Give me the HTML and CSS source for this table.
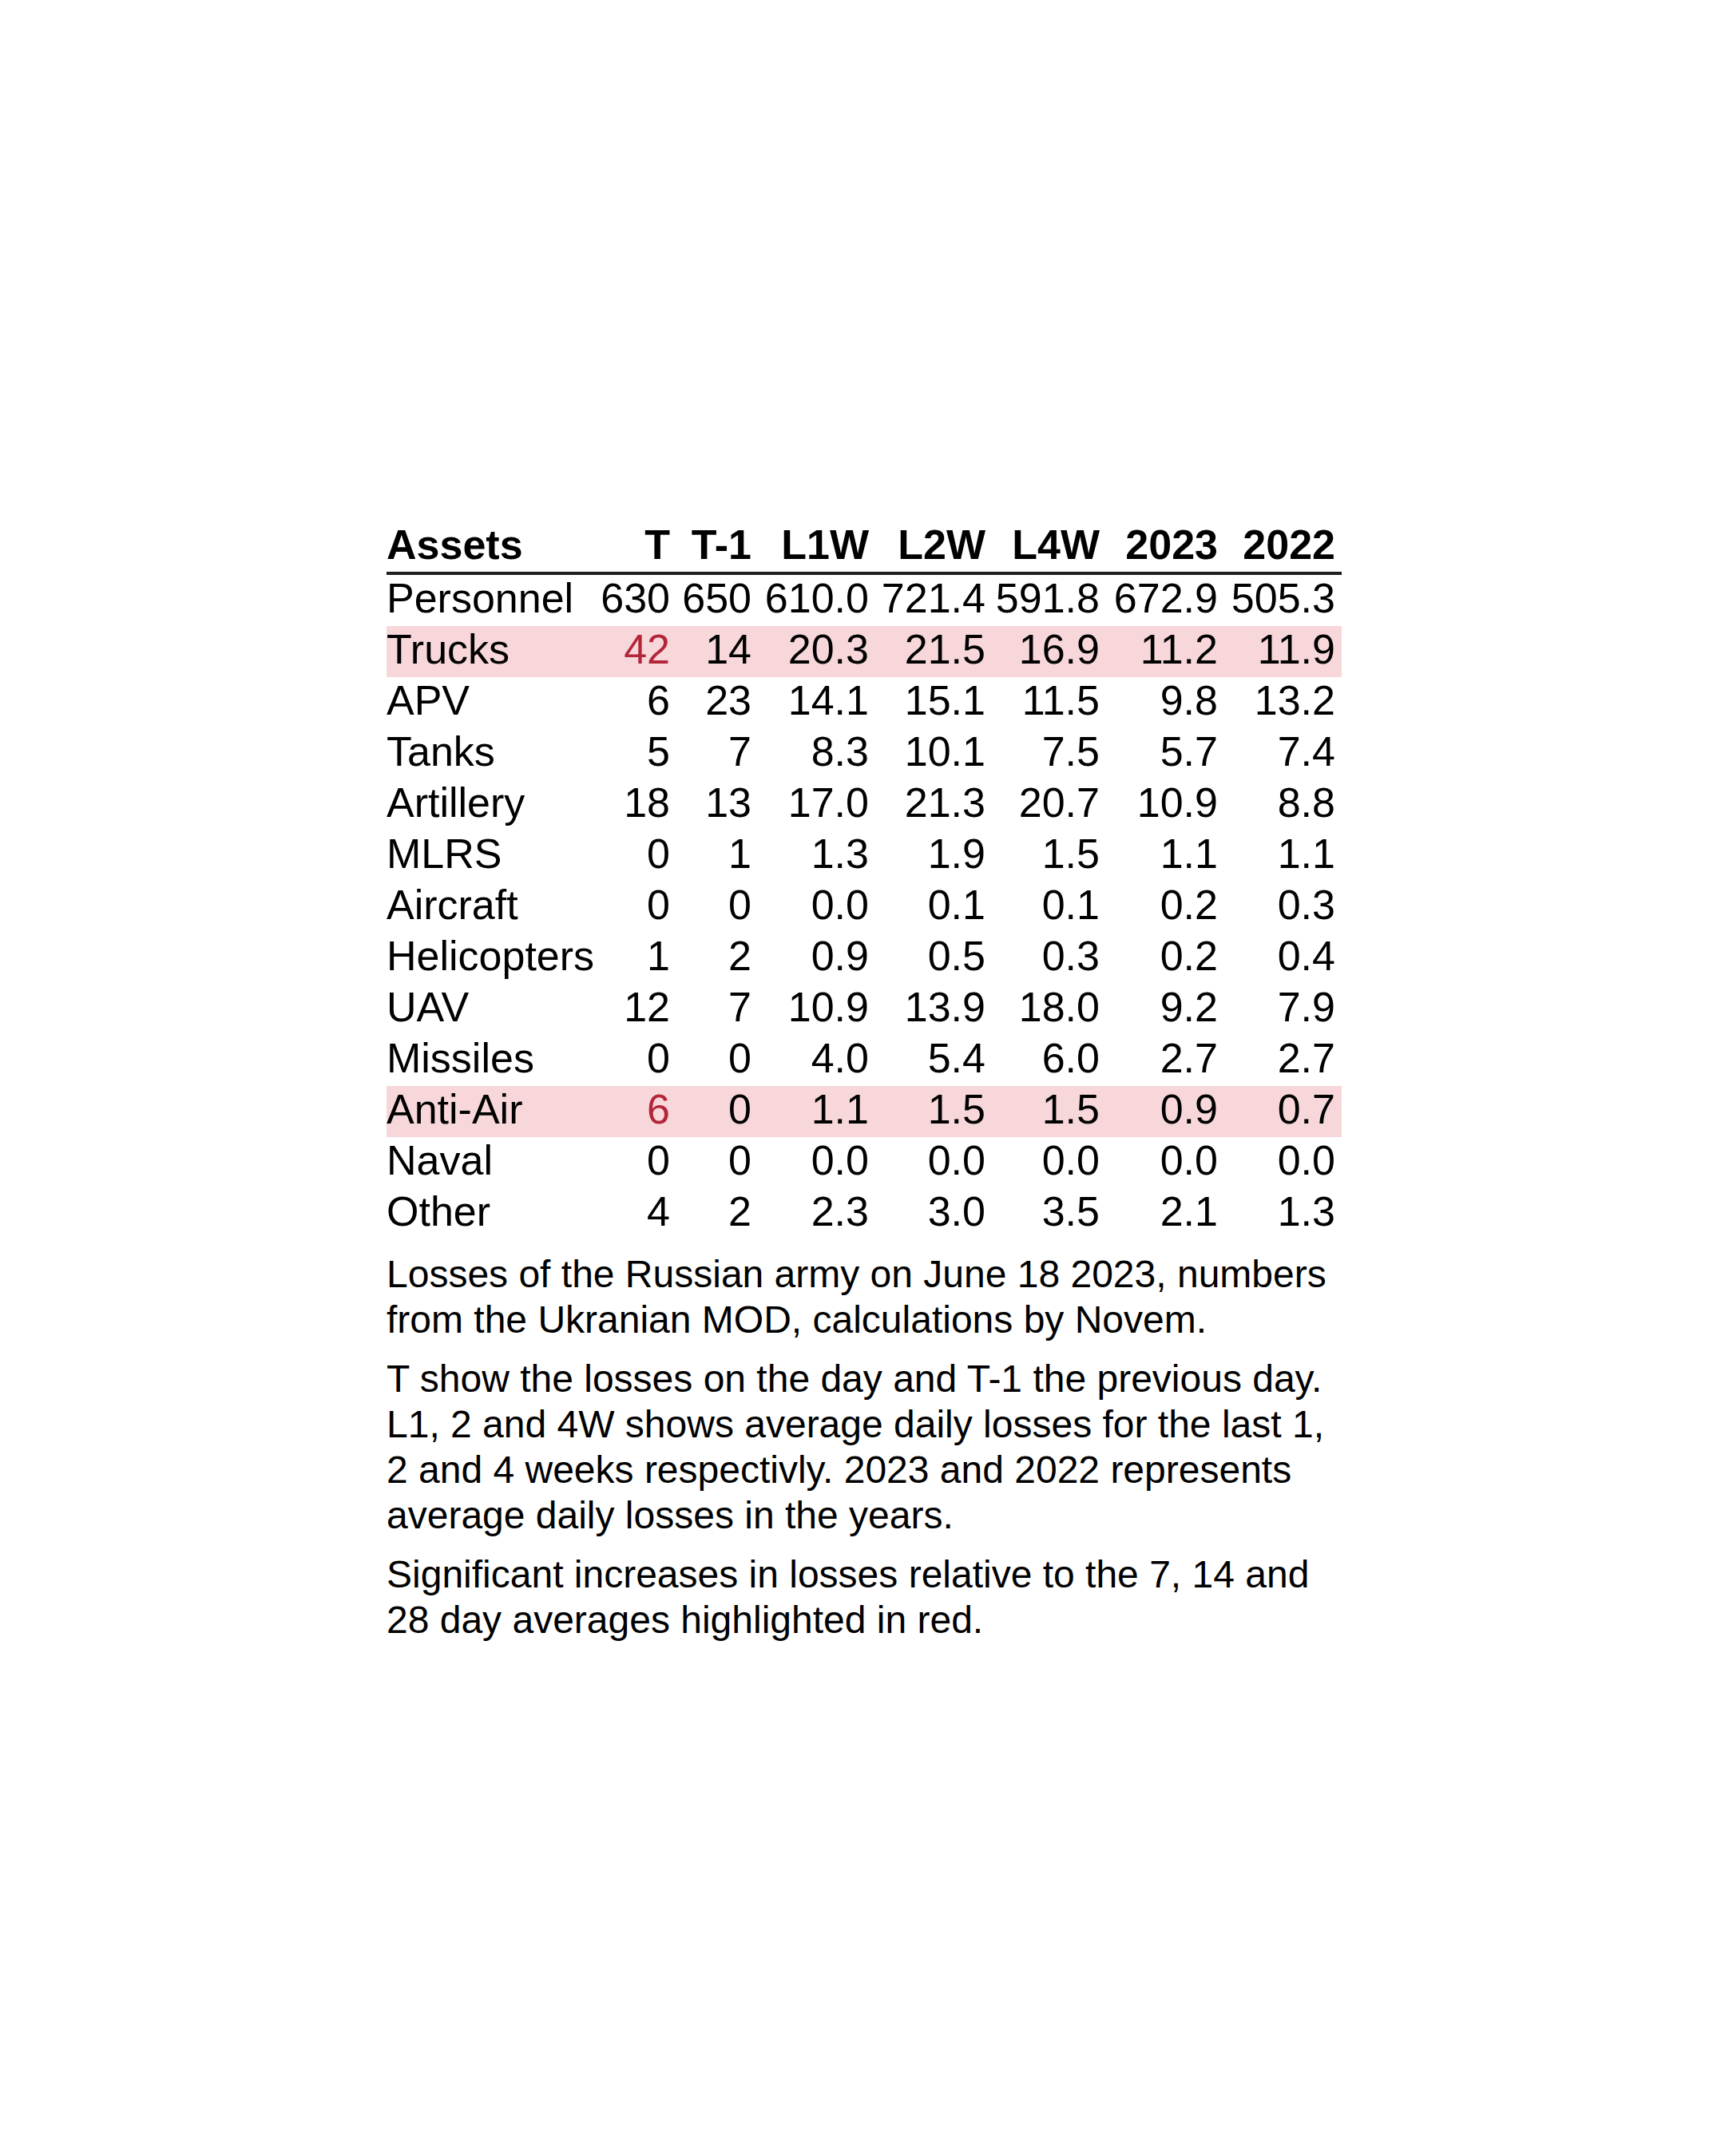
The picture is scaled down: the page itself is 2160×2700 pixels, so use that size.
FILE: index.html
```html
<!DOCTYPE html>
<html lang="en">
<head>
<meta charset="utf-8">
<title>Losses of the Russian army</title>
<link rel="stylesheet" href="styles.css">
</head>
<body>
<div class="report">
  <table class="losses">
    <colgroup>
      <col class="c-name">
      <col class="c-t">
      <col class="c-t1">
      <col class="c-l1">
      <col class="c-l2">
      <col class="c-l4">
      <col class="c-y23">
      <col class="c-y22">
    </colgroup>
    <thead>
      <tr>
        <th class="name">Assets</th>
        <th>T</th>
        <th>T-1</th>
        <th>L1W</th>
        <th>L2W</th>
        <th>L4W</th>
        <th>2023</th>
        <th>2022</th>
      </tr>
    </thead>
    <tbody>
      <tr><td class="name">Personnel</td><td>630</td><td>650</td><td>610.0</td><td>721.4</td><td>591.8</td><td>672.9</td><td>505.3</td></tr>
      <tr class="alert"><td class="name">Trucks</td><td class="hot">42</td><td>14</td><td>20.3</td><td>21.5</td><td>16.9</td><td>11.2</td><td>11.9</td></tr>
      <tr><td class="name">APV</td><td>6</td><td>23</td><td>14.1</td><td>15.1</td><td>11.5</td><td>9.8</td><td>13.2</td></tr>
      <tr><td class="name">Tanks</td><td>5</td><td>7</td><td>8.3</td><td>10.1</td><td>7.5</td><td>5.7</td><td>7.4</td></tr>
      <tr><td class="name">Artillery</td><td>18</td><td>13</td><td>17.0</td><td>21.3</td><td>20.7</td><td>10.9</td><td>8.8</td></tr>
      <tr><td class="name">MLRS</td><td>0</td><td>1</td><td>1.3</td><td>1.9</td><td>1.5</td><td>1.1</td><td>1.1</td></tr>
      <tr><td class="name">Aircraft</td><td>0</td><td>0</td><td>0.0</td><td>0.1</td><td>0.1</td><td>0.2</td><td>0.3</td></tr>
      <tr><td class="name">Helicopters</td><td>1</td><td>2</td><td>0.9</td><td>0.5</td><td>0.3</td><td>0.2</td><td>0.4</td></tr>
      <tr><td class="name">UAV</td><td>12</td><td>7</td><td>10.9</td><td>13.9</td><td>18.0</td><td>9.2</td><td>7.9</td></tr>
      <tr><td class="name">Missiles</td><td>0</td><td>0</td><td>4.0</td><td>5.4</td><td>6.0</td><td>2.7</td><td>2.7</td></tr>
      <tr class="alert"><td class="name">Anti-Air</td><td class="hot">6</td><td>0</td><td>1.1</td><td>1.5</td><td>1.5</td><td>0.9</td><td>0.7</td></tr>
      <tr><td class="name">Naval</td><td>0</td><td>0</td><td>0.0</td><td>0.0</td><td>0.0</td><td>0.0</td><td>0.0</td></tr>
      <tr><td class="name">Other</td><td>4</td><td>2</td><td>2.3</td><td>3.0</td><td>3.5</td><td>2.1</td><td>1.3</td></tr>
    </tbody>
  </table>
  <div class="notes">
    <p class="note">Losses of the Russian army on June 18 2023, numbers from the Ukranian MOD, calculations by Novem.</p>
    <p class="note">T show the losses on the day and T-1 the previous day. L1, 2 and 4W shows average daily losses for the last 1, 2 and 4 weeks respectivly. 2023 and 2022 represents average daily losses in the years.</p>
    <p class="note">Significant increases in losses relative to the 7, 14 and 28 day averages highlighted in red.</p>
  </div>
</div>
</body>
</html>
```

FILE: styles.css
```css
html, body {
  margin: 0;
  padding: 0;
  background: #ffffff;
}

body {
  width: 2160px;
  min-height: 2700px;
  font-family: "Liberation Sans", Arial, Helvetica, sans-serif;
  color: #000000;
}

.report {
  width: 1196px;
  margin: 653px 0 0 484px;
}

.losses {
  width: 1196px;
  table-layout: fixed;
  border-collapse: collapse;
  border-spacing: 0;
  font-size: 52px;
}

.c-name { width: 261px; }
.c-t { width: 102px; }
.c-t1 { width: 102px; }
.c-l1 { width: 147px; }
.c-l2 { width: 146px; }
.c-l4 { width: 143px; }
.c-y23 { width: 148px; }
.c-y22 { width: 147px; }

.losses th,
.losses td {
  padding: 0 8px 5px 0;
  line-height: 59px;
  text-align: right;
  white-space: nowrap;
  vertical-align: top;
}

.losses th {
  font-weight: bold;
  padding-bottom: 4px;
  border-bottom: 4px solid #1f1f1f;
}

.losses .name {
  text-align: left;
  padding-left: 0;
}

.losses tr.alert td {
  background: #f8d7da;
}

.losses td.hot {
  color: #b3263a;
}

.notes {
  margin-top: 15px;
  font-size: 48px;
  line-height: 57px;
}

.note {
  margin: 0;
}

.note + .note {
  margin-top: 17px;
}
```
